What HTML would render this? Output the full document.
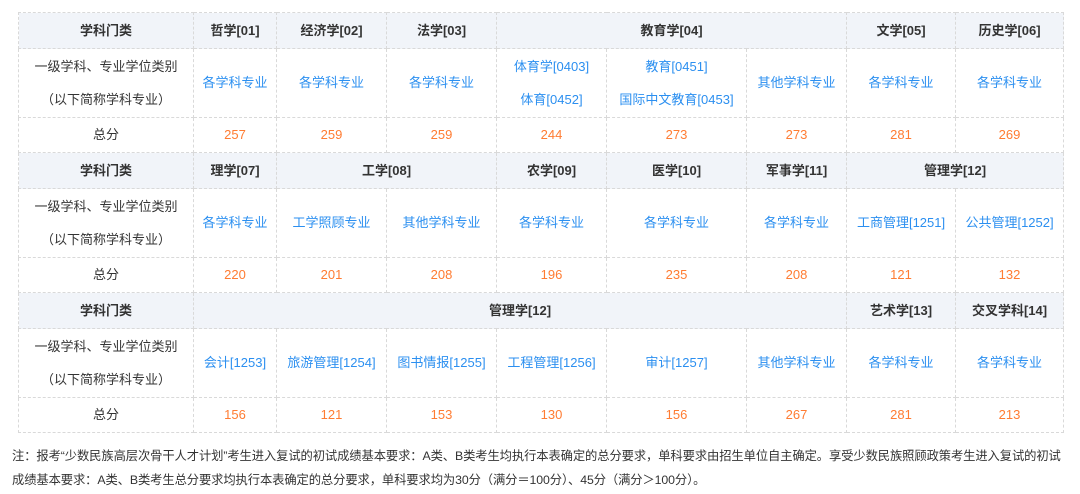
<!DOCTYPE html>
<html><head><meta charset="utf-8"><style>
body{margin:0;background:#fff;font-family:"Liberation Sans","Noto Sans CJK SC",sans-serif;font-size:13px;color:#333;}
table{position:absolute;left:18px;top:12px;border-collapse:collapse;table-layout:fixed;width:1045px;}
td{border:1px dashed #d9d9d9;text-align:center;padding:0;line-height:20px;}
tr.h td{background:#f1f4f9;font-weight:bold;height:35px;}
tr.m td{height:68px;}
tr.s td{height:34px;}
.b{color:#2b8ff0;}
.o{color:#ff7c32;}
.m2 td div{line-height:33px}
.note{position:absolute;left:12px;top:444px;width:1066px;font-size:12.3px;line-height:24px;color:#333;letter-spacing:-0.1px;}
</style></head><body>
<table>
<colgroup><col style="width:175px"><col style="width:83px"><col style="width:110px"><col style="width:110px"><col style="width:110px"><col style="width:140px"><col style="width:100px"><col style="width:109px"><col style="width:108px"></colgroup>
<tr class="h"><td>学科门类</td><td>哲学[01]</td><td>经济学[02]</td><td>法学[03]</td><td colspan="3">教育学[04]</td><td>文学[05]</td><td>历史学[06]</td></tr>
<tr class="m m2"><td><div>一级学科、专业学位类别<br>（以下简称学科专业）</div></td><td class="b">各学科专业</td><td class="b">各学科专业</td><td class="b">各学科专业</td><td class="b"><div>体育学[0403]<br>体育[0452]</div></td><td class="b"><div>教育[0451]<br>国际中文教育[0453]</div></td><td class="b">其他学科专业</td><td class="b">各学科专业</td><td class="b">各学科专业</td></tr>
<tr class="s"><td>总分</td><td class="o">257</td><td class="o">259</td><td class="o">259</td><td class="o">244</td><td class="o">273</td><td class="o">273</td><td class="o">281</td><td class="o">269</td></tr>
<tr class="h"><td>学科门类</td><td>理学[07]</td><td colspan="2">工学[08]</td><td>农学[09]</td><td>医学[10]</td><td>军事学[11]</td><td colspan="2">管理学[12]</td></tr>
<tr class="m m2"><td><div>一级学科、专业学位类别<br>（以下简称学科专业）</div></td><td class="b">各学科专业</td><td class="b">工学照顾专业</td><td class="b">其他学科专业</td><td class="b">各学科专业</td><td class="b">各学科专业</td><td class="b">各学科专业</td><td class="b">工商管理[1251]</td><td class="b">公共管理[1252]</td></tr>
<tr class="s"><td>总分</td><td class="o">220</td><td class="o">201</td><td class="o">208</td><td class="o">196</td><td class="o">235</td><td class="o">208</td><td class="o">121</td><td class="o">132</td></tr>
<tr class="h"><td>学科门类</td><td colspan="6">管理学[12]</td><td>艺术学[13]</td><td>交叉学科[14]</td></tr>
<tr class="m m2"><td><div>一级学科、专业学位类别<br>（以下简称学科专业）</div></td><td class="b">会计[1253]</td><td class="b">旅游管理[1254]</td><td class="b">图书情报[1255]</td><td class="b">工程管理[1256]</td><td class="b">审计[1257]</td><td class="b">其他学科专业</td><td class="b">各学科专业</td><td class="b">各学科专业</td></tr>
<tr class="s"><td>总分</td><td class="o">156</td><td class="o">121</td><td class="o">153</td><td class="o">130</td><td class="o">156</td><td class="o">267</td><td class="o">281</td><td class="o">213</td></tr>
</table>
<div class="note">注：报考“少数民族高层次骨干人才计划”考生进入复试的初试成绩基本要求：A类、B类考生均执行本表确定的总分要求，单科要求由招生单位自主确定。享受少数民族照顾政策考生进入复试的初试<br>成绩基本要求：A类、B类考生总分要求均执行本表确定的总分要求，单科要求均为30分（满分＝100分）、45分（满分＞100分）。</div>
</body></html>
